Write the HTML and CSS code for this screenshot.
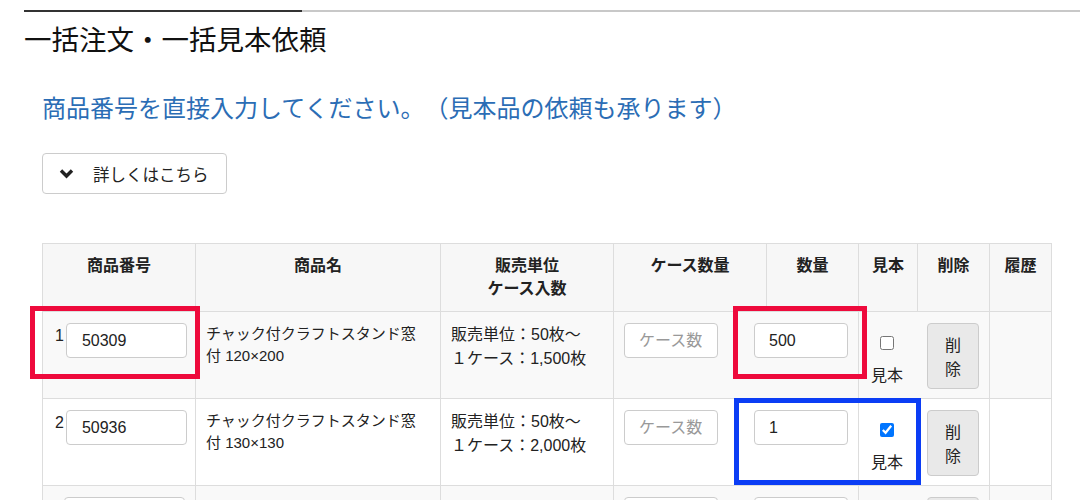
FILE: index.html
```html
<!DOCTYPE html>
<html lang="ja">
  <head>
    <meta charset="UTF-8" />
    <meta name="viewport" content="width=device-width, initial-scale=1.0" />
    <title>一括注文・一括見本依頼</title>
    <link rel="stylesheet" href="styles.css">
  </head>

  <body>
    <div class="bo-rule">
      <span class="bo-rule-dark"></span>
      <span class="bo-rule-light"></span>
    </div>

    <div class="bo-page">
      <h1 class="bo-title">一括注文・一括見本依頼</h1>

      <div class="bo-body">
        <p class="bo-lead">商品番号を直接入力してください。（見本品の依頼も承ります）</p>

        <button type="button" class="bo-more">
          <svg class="bo-more-icon" width="15" height="11" viewBox="0 0 15 11">
            <polyline points="2,2.5 7.5,8 13,2.5" fill="none" stroke="#222" stroke-width="3.4" />
          </svg>
          <span>詳しくはこちら</span>
        </button>

        <div class="bo-table-wrap">
          <table class="bo-table">
            <colgroup>
              <col style="width: 153px" />
              <col style="width: 245px" />
              <col style="width: 173px" />
              <col style="width: 153px" />
              <col style="width: 92px" />
              <col style="width: 59px" />
              <col style="width: 72px" />
              <col style="width: 62px" />
            </colgroup>
            <thead>
              <tr>
                <th>商品番号</th>
                <th>商品名</th>
                <th>販売単位<br />ケース入数</th>
                <th>ケース数量</th>
                <th>数量</th>
                <th>見本</th>
                <th>削除</th>
                <th>履歴</th>
              </tr>
            </thead>
            <tbody>
              <tr>
                <td>
                  <div class="bo-code">
                    <span class="bo-num">1</span>
                    <input class="bo-input bo-input-code" type="text" value="50309" />
                  </div>
                </td>
                <td class="bo-name">チャック付クラフトスタンド窓付 120×200</td>
                <td class="bo-unit">販売単位：50枚～<br />１ケース：1,500枚</td>
                <td colspan="2">
                  <div class="bo-qty">
                    <input class="bo-input bo-input-qty" type="text" placeholder="ケース数" />
                    <input class="bo-input bo-input-qty" type="text" value="500" />
                  </div>
                </td>
                <td colspan="2">
                  <div class="bo-actions">
                    <label class="bo-sample">
                      <input type="checkbox" />
                      <span>見本</span>
                    </label>
                    <button type="button" class="bo-delete">削<br />除</button>
                  </div>
                </td>
                <td></td>
              </tr>
              <tr>
                <td>
                  <div class="bo-code">
                    <span class="bo-num">2</span>
                    <input class="bo-input bo-input-code" type="text" value="50936" />
                  </div>
                </td>
                <td class="bo-name">チャック付クラフトスタンド窓付 130×130</td>
                <td class="bo-unit">販売単位：50枚～<br />１ケース：2,000枚</td>
                <td colspan="2">
                  <div class="bo-qty">
                    <input class="bo-input bo-input-qty" type="text" placeholder="ケース数" />
                    <input class="bo-input bo-input-qty" type="text" value="1" />
                  </div>
                </td>
                <td colspan="2">
                  <div class="bo-actions">
                    <label class="bo-sample">
                      <input type="checkbox" checked />
                      <span>見本</span>
                    </label>
                    <button type="button" class="bo-delete">削<br />除</button>
                  </div>
                </td>
                <td></td>
              </tr>
              <!-- third row only peeks in at the bottom edge -->
              <tr>
                <td>
                  <div class="bo-code">
                    <span class="bo-num"></span>
                    <input class="bo-input bo-input-code" type="text" />
                  </div>
                </td>
                <td class="bo-name"></td>
                <td class="bo-unit"></td>
                <td colspan="2">
                  <div class="bo-qty">
                    <input class="bo-input bo-input-qty" type="text" />
                    <input class="bo-input bo-input-qty" type="text" />
                  </div>
                </td>
                <td colspan="2">
                  <div class="bo-actions">
                    <span class="bo-sample"></span>
                    <button type="button" class="bo-delete"></button>
                  </div>
                </td>
                <td></td>
              </tr>
            </tbody>
          </table>

          <!-- highlight frames drawn over the table -->
          <span class="bo-mark bo-mark-code"></span>
          <span class="bo-mark bo-mark-qty"></span>
          <span class="bo-mark bo-mark-sample"></span>
        </div>
      </div>
    </div>
  </body>
</html>
```

FILE: styles.css
```css
html,
body {
  margin: 0;
  padding: 0;
  background: #fff;
  overflow: hidden;
}
body {
  font-family: "Liberation Sans", "Noto Sans CJK JP", sans-serif;
  color: #222;
  text-spacing-trim: space-all;
}

.bo-rule {
  display: flex;
  margin-top: 10px;
  padding-left: 24px;
}
.bo-rule-dark {
  width: 278px;
  height: 2px;
  background: #333;
}
.bo-rule-light {
  flex: 1;
  height: 2px;
  background: #c8c8c8;
}

.bo-page {
  padding-left: 24px;
}
.bo-title {
  margin: 8px 0 0;
  font-family: "Noto Sans CJK JP", sans-serif;
  font-size: 27.5px;
  line-height: 36px;
  font-weight: 400;
  color: #111;
}

.bo-body {
  padding-left: 18px;
}
.bo-lead {
  margin: 35px 0 0;
  font-family: "Noto Sans CJK JP", sans-serif;
  font-size: 24px;
  line-height: 32px;
  color: #2b6db5;
}

.bo-more {
  display: flex;
  align-items: center;
  gap: 19px;
  margin-top: 30px;
  width: 185px;
  height: 41px;
  padding: 0 0 0 16px;
  border: 1px solid #ccc;
  border-radius: 4px;
  background: #fff;
  font-family: "Noto Sans CJK JP", sans-serif;
  font-size: 16.5px;
  color: #222;
}
.bo-more-icon {
  display: block;
}

.bo-table-wrap {
  position: relative;
  margin-top: 49px;
}
.bo-table {
  width: 1009px;
  table-layout: fixed;
  border-collapse: collapse;
}
.bo-table th,
.bo-table td {
  border: 1px solid #ddd;
  vertical-align: top;
}
.bo-table th {
  padding: 10px 6px 11px;
  background: #f7f7f7;
  font-size: 16px;
  line-height: 23px;
  font-weight: 700;
  text-align: center;
  color: #222;
}
.bo-table td {
  padding: 11px 10px 9px;
}
.bo-table tbody tr:nth-child(odd) td {
  background: #f9f9f9;
}

.bo-code {
  display: flex;
  align-items: flex-start;
  gap: 2px;
  padding-left: 2px;
}
.bo-num {
  width: 9px;
  font-size: 16px;
  line-height: 18px;
  padding-top: 4px;
}

.bo-input {
  box-sizing: border-box;
  height: 35px;
  padding: 0 15px;
  border: 1px solid #ccc;
  border-radius: 4px;
  background: #fff;
  font-family: "Liberation Sans", "Noto Sans CJK JP", sans-serif;
  font-size: 16px;
  color: #222;
}
.bo-input::placeholder {
  color: #999;
}
.bo-input-code {
  width: 121px;
}
.bo-input-qty {
  width: 94px;
  padding-left: 14px;
}

.bo-name {
  font-size: 15px;
  line-height: 22px;
  padding-right: 12px !important;
}
.bo-unit {
  font-size: 16px;
  line-height: 24px;
}

.bo-qty {
  display: flex;
  gap: 36px;
}

.bo-actions {
  display: flex;
  align-items: flex-start;
  gap: 22px;
}
.bo-sample {
  display: flex;
  flex-direction: column;
  align-items: center;
  width: 36px;
  font-size: 16px;
  line-height: 22px;
}
.bo-sample input {
  display: block;
  width: 14px;
  height: 14px;
  margin: 13px 0 0;
}
.bo-sample span {
  margin-top: 15px;
}
.bo-delete {
  width: 52px;
  height: 66px;
  padding: 0;
  border: 1px solid #ccc;
  border-radius: 4px;
  background: #e9e9e9;
  font-family: "Noto Sans CJK JP", sans-serif;
  font-size: 16px;
  line-height: 24px;
  color: #222;
}

.bo-mark {
  position: absolute;
  box-sizing: border-box;
  border: 5px solid #ee0a3c;
}
.bo-mark-code {
  left: -12px;
  top: 63px;
  width: 170px;
  height: 73px;
}
.bo-mark-qty {
  left: 691px;
  top: 63px;
  width: 134px;
  height: 73px;
}
.bo-mark-sample {
  left: 692px;
  top: 155px;
  width: 187px;
  height: 87px;
  border-color: #0b3df5;
}
```
